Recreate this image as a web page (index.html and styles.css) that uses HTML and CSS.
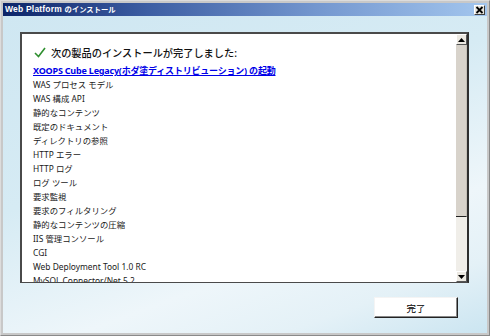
FILE: index.html
```html
<!DOCTYPE html>
<html lang="ja">
<head>
<meta charset="utf-8">
<link rel="stylesheet" href="styles.css">
</head>
<body>
<div class="window">
  <div class="titlebar">
    <span class="title">Web Platform <span class="title-ja">のインストール</span></span>
    <span class="close">
      <svg width="9" height="8" viewBox="0 0 9 8"><path d="M1.5 1 L7.5 7 M7.5 1 L1.5 7" stroke="#000" stroke-width="1.8"/></svg>
    </span>
  </div>
  <div class="client">
    <div class="panel">
      <div class="list">
        <div class="heading">
          <svg class="check" width="12" height="11" viewBox="0 0 12 11"><path d="M1 6 L4.5 9.5 L11 1" fill="none" stroke="#2f8f2f" stroke-width="1.6"/></svg>
          <span>次の製品のインストールが完了しました:</span>
        </div>
        <a class="link" href="#">XOOPS Cube Legacy(ホダ塗ディストリビューション) の起動</a>
        <div class="item">WAS プロセス モデル</div>
        <div class="item">WAS 構成 API</div>
        <div class="item">静的なコンテンツ</div>
        <div class="item">既定のドキュメント</div>
        <div class="item">ディレクトリの参照</div>
        <div class="item">HTTP エラー</div>
        <div class="item">HTTP ログ</div>
        <div class="item">ログ ツール</div>
        <div class="item">要求監視</div>
        <div class="item">要求のフィルタリング</div>
        <div class="item">静的なコンテンツの圧縮</div>
        <div class="item">IIS 管理コンソール</div>
        <div class="item">CGI</div>
        <div class="item">Web Deployment Tool 1.0 RC</div>
        <div class="item">MySQL Connector/Net 5.2</div>
      </div>
      <div class="scrollbar">
        <div class="sbtn"><svg width="7" height="4" viewBox="0 0 7 4"><path d="M0 4 L3.5 0 L7 4 Z" fill="#000"/></svg></div>
        <div class="track"><div class="thumb"></div><div class="rest"></div></div>
        <div class="sbtn"><svg width="7" height="4" viewBox="0 0 7 4"><path d="M0 0 L3.5 4 L7 0 Z" fill="#000"/></svg></div>
      </div>
    </div>
    <div class="footer">
      <button class="done">完了</button>
    </div>
  </div>
</div>
</body>
</html>
```
FILE: styles.css
```css
* { box-sizing: border-box; }
html, body { margin: 0; padding: 0; }
body {
  width: 490px;
  height: 336px;
  overflow: hidden;
  font-family: "Noto Sans", "Noto Sans CJK JP", sans-serif;
}
.window {
  width: 490px;
  height: 336px;
  display: flex;
  flex-direction: column;
  background: #c8c8c8;
  border: 1px solid #8a8a8a;
  border-top-color: #dcdcdc;
  border-left-color: #dcdcdc;
  padding: 2px;
}
.titlebar {
  height: 13px;
  flex: none;
  display: flex;
  align-items: center;
  justify-content: space-between;
  background: linear-gradient(to right, #0c2468 0%, #3d5ea3 30%, #7497cf 65%, #a3c6ee 100%);
  padding: 0 2px 0 2px;
}
.title {
  color: #fff;
  font-family: "Liberation Sans", "Noto Sans CJK JP", sans-serif;
  font-weight: bold;
  font-size: 8.5px;
  letter-spacing: 0.2px;
  line-height: 13px;
}
.title-ja {
  font-family: "Noto Sans CJK JP", sans-serif;
  font-size: 7.3px;
  letter-spacing: 0;
}
.close {
  width: 11px;
  height: 10px;
  background: #e6e4de;
  border: 1px solid;
  border-color: #fff #404040 #404040 #fff;
  display: flex;
  align-items: center;
  justify-content: center;
}
.client {
  flex: 1;
  display: flex;
  flex-direction: column;
  background: linear-gradient(160deg, #cfe7f2 0%, #d6ebf4 40%, #eef6fa 70%, #e4f1f7 85%, #cbe5f1 100%);
  padding: 16px 18px 14px 17px;
}
.panel {
  height: 251px;
  flex: none;
  display: flex;
  background: #fff;
  border: 2px solid #4a4a4a;
  border-bottom-width: 1px;
  border-right-color: #2e2e2e;
}
.list {
  flex: 1;
  overflow: hidden;
  padding: 10px 0 0 11px;
  font-size: 8.4px;
  color: #1a1a1a;
}
.heading {
  display: flex;
  align-items: center;
  gap: 5px;
  height: 16px;
  font-size: 10.2px;
  font-weight: 500;
  color: #111;
  margin-left: 1px;
}
.check { flex: none; }
.link {
  display: block;
  margin-top: 4px;
  color: #0000e8;
  font-weight: bold;
  font-size: 9px;
  line-height: 14px;
  letter-spacing: -0.2px;
}
.item {
  line-height: 14px;
  white-space: nowrap;
}
.scrollbar {
  width: 11px;
  flex: none;
  display: flex;
  flex-direction: column;
  background: #ece9e2;
}
.sbtn {
  height: 11px;
  flex: none;
  background: #ece9e2;
  border: 1px solid;
  border-color: #fff #555 #555 #fff;
  display: flex;
  align-items: center;
  justify-content: center;
}
.track {
  flex: 1;
  display: flex;
  flex-direction: column;
}
.thumb {
  height: 172px;
  background: #d8d3cb;
  border-right: 1px solid #c4bfb6;
  border-bottom: 1px solid #222;
}
.rest {
  flex: 1;
  background: #f0eee9;
}
.footer {
  flex: 1;
  display: flex;
  justify-content: flex-end;
  align-items: flex-start;
  padding: 14px 11px 0 0;
}
.done {
  width: 84px;
  height: 21px;
  background: #fff;
  border: 1px solid;
  border-color: #f4f4f4 #222 #222 #f4f4f4;
  box-shadow: inset -1px -1px 0 #888;
  font-family: "Noto Sans CJK JP", sans-serif;
  font-size: 9.5px;
  color: #000;
  padding: 0;
}
```
